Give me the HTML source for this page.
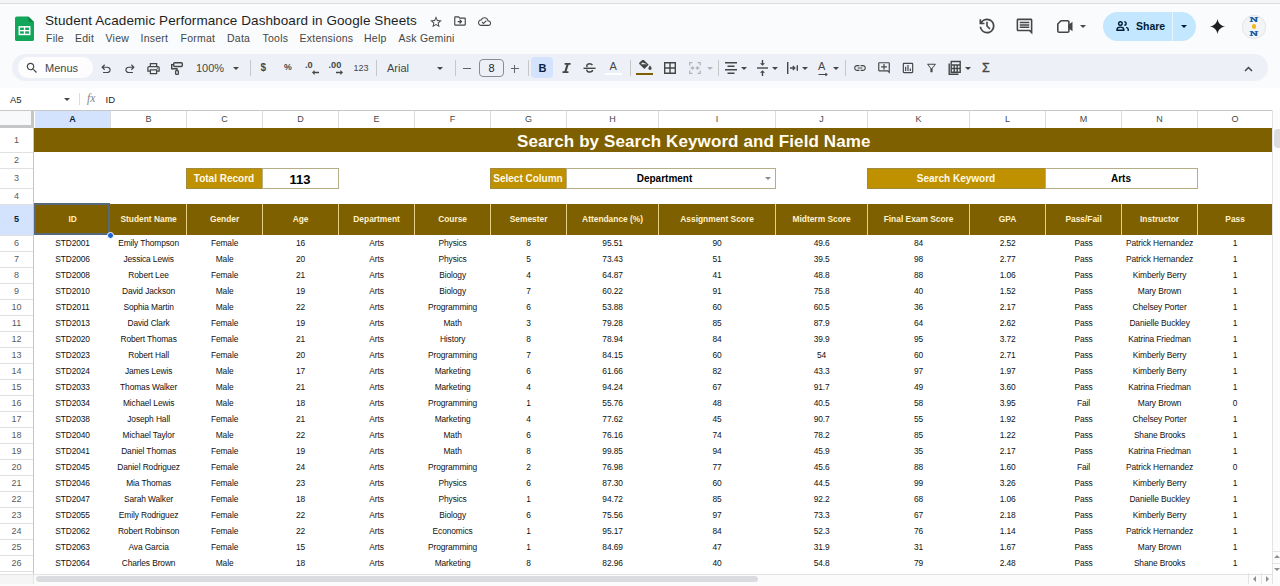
<!DOCTYPE html>
<html><head><meta charset="utf-8"><title>Student Academic Performance Dashboard</title>
<style>
*{margin:0;padding:0;box-sizing:border-box}
html,body{width:1280px;height:586px;overflow:hidden;background:#f9fbfd;font-family:"Liberation Sans",sans-serif;color:#1f1f1f;position:relative}
.a{position:absolute;white-space:nowrap}
.ic{position:absolute}
.c{position:absolute;text-align:center;white-space:nowrap;overflow:hidden}
.menu{position:absolute;top:31.5px;font-size:10.5px;letter-spacing:0.25px;color:#444746;white-space:nowrap}
.dd{position:absolute;width:0;height:0;border-left:3.5px solid transparent;border-right:3.5px solid transparent;border-top:3.5px solid #444746}
.dv{position:absolute;width:1px;height:16px;top:60px;background:#c7c7c7}
</style></head><body>

<div class="a" style="left:0;top:0;width:1280px;height:3px;background:#f4f5f7"></div>
<div class="a" style="left:0;top:3px;width:1280px;height:1px;background:#dadce0"></div>
<svg class="ic" style="left:15.3px;top:16px" width="19" height="25.5" viewBox="0 0 20 26">
<path d="M2 0h12l6 6v18a2 2 0 0 1-2 2H2a2 2 0 0 1-2-2V2a2 2 0 0 1 2-2z" fill="#11a65a"/>
<path d="M14 0l6 6h-4a2 2 0 0 1-2-2z" fill="#0b8a45"/>
<rect x="4.5" y="11" width="11" height="8" fill="none" stroke="#fff" stroke-width="1.6"/>
<line x1="4.5" y1="15" x2="15.5" y2="15" stroke="#fff" stroke-width="1.4"/>
<line x1="10" y1="11" x2="10" y2="19" stroke="#fff" stroke-width="1.4"/>
</svg>
<div class="a" style="left:45px;top:13px;font-size:13.5px;letter-spacing:0.09px;color:#1f1f1f">Student Academic Performance Dashboard in Google Sheets</div>
<div class="menu" style="left:46px">File</div>
<div class="menu" style="left:75px">Edit</div>
<div class="menu" style="left:105.5px">View</div>
<div class="menu" style="left:140.5px">Insert</div>
<div class="menu" style="left:180.5px">Format</div>
<div class="menu" style="left:227px">Data</div>
<div class="menu" style="left:262.5px">Tools</div>
<div class="menu" style="left:299.5px">Extensions</div>
<div class="menu" style="left:364px">Help</div>
<div class="menu" style="left:398.5px">Ask Gemini</div>
<svg class="ic" style="left:429px;top:15px" width="14" height="14" viewBox="0 0 24 24"><path fill="#444746" d="M22 9.24l-7.19-.62L12 2 9.19 8.63 2 9.24l5.46 4.73L5.82 21 12 17.27 18.18 21l-1.63-7.03L22 9.24zM12 15.4l-3.76 2.27 1-4.28-3.32-2.88 4.38-.38L12 6.1l1.71 4.04 4.38.38-3.32 2.88 1 4.28L12 15.4z"/></svg>
<svg class="ic" style="left:453.1px;top:14.4px" width="14" height="14" viewBox="0 0 24 24"><path fill="#444746" d="M20 6h-8l-2-2H4c-1.1 0-1.99.9-1.99 2L2 18c0 1.1.9 2 2 2h16c1.1 0 2-.9 2-2V8c0-1.1-.9-2-2-2zm0 12H4V6h5.17l2 2H20v10zm-7.84-6H8v2h4.16l-1.59 1.59L11.99 17 16 13.01 11.99 9l-1.41 1.41L12.16 12z"/></svg>
<svg class="ic" style="left:477.8px;top:14.8px" width="13.1" height="13.1" viewBox="0 0 24 24"><path fill="#444746" d="M19.35 10.04C18.67 6.59 15.64 4 12 4 9.11 4 6.6 5.64 5.35 8.04 2.34 8.36 0 10.91 0 14c0 3.31 2.69 6 6 6h13c2.76 0 5-2.24 5-5 0-2.64-2.05-4.78-4.65-4.96zM19 18H6c-2.21 0-4-1.790-4-4 0-2.05 1.53-3.76 3.560-3.97l1.07-.11.5-.95C8.08 7.14 9.94 6 12 6c2.62 0 4.88 1.86 5.39 4.43l.3 1.5 1.53.11c1.56.1 2.78 1.41 2.78 2.96 0 1.65-1.35 3-3 3zm-9-3.82l-2.09-2.09L6.5 13.5 10 17l6.01-6.01-1.41-1.41z"/></svg>
<svg class="ic" style="left:976.8px;top:16.3px" width="20" height="20" viewBox="0 -960 960 960"><path fill="#444746" d="M480-120q-138 0-240.5-91.5T122-440h82q14 104 92.5 172T480-200q117 0 198.5-81.5T760-480q0-117-81.5-198.5T480-760q-69 0-129 32t-101 88h110v80H120v-240h80v94q51-64 124.5-99T480-840q75 0 140.5 28.5t114 77q48.5 48.5 77 114T840-480q0 75-28.5 140.5t-77 114q-48.5 48.5-114 77T480-120Zm112-192L440-464v-216h80v184l128 128-56 56Z"/></svg>
<svg class="ic" style="left:1014.7px;top:17px" width="19" height="19" viewBox="0 0 24 24"><path fill="#444746" d="M21.99 4c0-1.1-.89-2-1.99-2H4c-1.1 0-2 .9-2 2v12c0 1.1.9 2 2 2h14l4 4-.01-18zM20 4v13.17L18.83 16H4V4h16zM6 12h12v2H6zm0-3h12v2H6zm0-3h12v2H6z"/></svg>
<svg class="ic" style="left:1056.5px;top:20px" width="16" height="13" viewBox="0 0 16 13"><path fill="none" stroke="#444746" stroke-width="1.6" stroke-linejoin="round" d="M4 0.8H10.6a1.3 1.3 0 0 1 1.3 1.3V10.9a1.3 1.3 0 0 1-1.3 1.3H2.1A1.3 1.3 0 0 1 0.8 10.9V4z"/><path fill="#444746" d="M11.5 4.8L15.5 1.8V11.2L11.5 8.2z"/></svg>
<div class="dd" style="left:1079.5px;top:25px"></div>
<div class="a" style="left:1103px;top:11.5px;width:93px;height:29px;border-radius:14.5px;background:#c2e7ff"></div>
<div class="a" style="left:1172px;top:11px;width:1px;height:30px;background:#f9fbfd;opacity:.7"></div>
<svg class="ic" style="left:1116px;top:21px" width="13" height="10" viewBox="0 0 13 10"><g fill="none" stroke="#001d35" stroke-width="1.4"><circle cx="4.4" cy="2.5" r="1.8"/><path d="M1 9.2V8.4c0-1.3 1.5-2.3 3.4-2.3s3.4 1 3.4 2.3v.8z"/><path d="M8.3 0.7a1.8 1.8 0 0 1 0 3.6"/><path d="M10.2 6.3c1.2.4 2 1.1 2 2V9.9"/></g></svg>
<div class="a" style="left:1136px;top:19.8px;font-size:10.5px;font-weight:bold;color:#001d35">Share</div>
<div class="dd" style="left:1181px;top:25px;border-top-color:#001d35"></div>
<svg class="ic" style="left:1209px;top:18px" width="17" height="17" viewBox="0 0 24 24"><path fill="#1f1f1f" d="M12 1C12.6 7 17 11.4 23 12 17 12.6 12.6 17 12 23 11.4 17 7 12.6 1 12 7 11.4 11.4 7 12 1z"/></svg>
<div class="a" style="left:1242px;top:15px;width:24px;height:23.5px;border-radius:50%;background:#f3f4f6;border:1px solid #e4e6ea"></div>
<svg class="ic" style="left:1249px;top:16.8px" width="10" height="5.2" viewBox="0 0 10 6"><path fill="#1b5ea6" d="M0 0h3.4l3.4 3.2V1H5.8V0H10v1H8.8v5H6.9L2.9 2.1V5H4v1H0V5h1.2V1H0z"/></svg>
<div class="a" style="left:1251.8px;top:24.2px;width:4.4px;height:4.4px;border-radius:50%;background:#f4b41a"></div>
<svg class="ic" style="left:1249px;top:30.8px" width="10" height="5.2" viewBox="0 0 10 6"><path fill="#1b5ea6" d="M0 0h3.4l3.4 3.2V1H5.8V0H10v1H8.8v5H6.9L2.9 2.1V5H4v1H0V5h1.2V1H0z"/></svg>
<div class="a" style="left:12px;top:54px;width:1256px;height:27px;border-radius:13.5px;background:#edf1f7"></div>
<div class="a" style="left:17.5px;top:57px;width:75.5px;height:21px;border-radius:10.5px;background:#fdfdfe"></div>
<svg class="ic" style="left:25px;top:61px" width="14" height="14" viewBox="0 0 24 24"><path fill="#444746" d="M15.5 14h-.79l-.28-.27C15.41 12.59 16 11.11 16 9.5 16 5.910 13.09 3 9.5 3S3 5.91 3 9.5 5.91 16 9.5 16c1.61 0 3.09-.59 4.23-1.57l.27.28v.79l5 4.99L20.49 19l-4.99-5zm-6 0C7.01 14 5 11.99 5 9.5S7.01 5 9.5 5 14 7.01 14 9.5 11.99 14 9.5 14z"/></svg>
<div class="a" style="left:45px;top:62px;font-size:11px;color:#444746">Menus</div>
<svg class="ic" style="left:99px;top:62px" width="14" height="14" viewBox="0 -960 960 960"><path fill="#444746" d="M280-200v-80h284q63 0 109.5-40T720-420q0-60-46.5-100T564-560H312l104 104-56 56-200-200 200-200 56 56-104 104h252q97 0 166.5 63T800-420q0 94-69.5 157T564-200H280Z"/></svg>
<svg class="ic" style="left:123px;top:62px" width="14" height="14" viewBox="0 -960 960 960"><path fill="#444746" d="M396-200q-97 0-166.5-63T160-420q0-94 69.5-157T396-640h252L544-744l56-56 200 200-200 200-56-56 104-104H396q-63 0-109.5 40T240-420q0 60 46.5 100T396-280h284v80H396Z"/></svg>
<svg class="ic" style="left:146px;top:61px" width="15" height="15" viewBox="0 -960 960 960"><path fill="#444746" d="M640-640v-120H320v120h-80v-200h480v200h-80Zm-480 80h640-640Zm560 100q17 0 28.5-11.5T760-500q0-17-11.5-28.5T720-540q-17 0-28.5 11.5T680-500q0 17 11.5 28.5T720-460Zm-80 260v-160H320v160h320Zm80 80H240v-160H80v-240q0-51 35-85.5t85-34.5h560q51 0 85.5 34.5T880-520v240H720v160Zm80-240v-160q0-17-11.5-28.5T760-560H200q-17 0-28.5 11.5T160-520v160h80v-80h480v80h80Z"/></svg>
<svg class="ic" style="left:170.5px;top:62px" width="12" height="13" viewBox="0 0 12 13"><rect x="2.7" y="0.7" width="8.6" height="3.8" rx="0.9" fill="none" stroke="#444746" stroke-width="1.4"/><path fill="none" stroke="#444746" stroke-width="1.4" d="M2.7 2.6H0.7v4.2H6v2"/><rect x="4.6" y="8.6" width="2.8" height="3.8" rx="0.8" fill="none" stroke="#444746" stroke-width="1.3"/></svg>
<div class="a" style="left:196px;top:62px;font-size:11px;color:#444746">100%</div>
<div class="dd" style="left:233px;top:67px"></div>
<div class="dv" style="left:250px"></div>
<div class="a" style="left:260.5px;top:62px;font-size:10px;font-weight:bold;color:#444746">$</div>
<div class="a" style="left:283.5px;top:60.5px;font-size:9.5px;font-weight:bold;color:#444746;transform:scaleX(0.92);transform-origin:left">%</div>
<div class="a" style="left:305px;top:59.5px;font-size:9.2px;font-weight:bold;color:#444746">.0</div>
<svg class="ic" style="left:311.5px;top:69.5px" width="7" height="5" viewBox="0 0 7 5"><path fill="#444746" d="M0 2.5L2.6 0v1.8H7v1.4H2.6V5z"/></svg>
<div class="a" style="left:328.5px;top:59.5px;font-size:9.2px;font-weight:bold;color:#444746">.00</div>
<svg class="ic" style="left:335.5px;top:69.5px" width="7" height="5" viewBox="0 0 7 5"><path fill="#444746" d="M7 2.5L4.4 0v1.8H0v1.4h4.4V5z"/></svg>
<div class="a" style="left:353.5px;top:63px;font-size:9px;color:#444746">123</div>
<div class="dv" style="left:375.5px"></div>
<div class="a" style="left:387px;top:62px;font-size:11px;color:#444746">Arial</div>
<div class="dd" style="left:436.5px;top:67px"></div>
<div class="dv" style="left:454.5px"></div>
<div class="a" style="left:462.5px;top:68px;width:8px;height:1.3px;background:#5f6368"></div>
<div class="a" style="left:479px;top:59px;width:25px;height:18px;border:1px solid #8a8d8f;border-radius:4px"></div>
<div class="a" style="left:479px;top:62px;width:25px;text-align:center;font-size:11px;color:#1f1f1f">8</div>
<div class="a" style="left:510.5px;top:68px;width:8.5px;height:1.3px;background:#5f6368"></div>
<div class="a" style="left:514.1px;top:64.5px;width:1.3px;height:8.5px;background:#5f6368"></div>
<div class="dv" style="left:527.5px"></div>
<div class="a" style="left:531px;top:57px;width:22px;height:21px;border-radius:4px;background:#d3e3fd"></div>
<div class="a" style="left:538.5px;top:62px;font-size:11px;font-weight:bold;color:#0b1f3f">B</div>
<svg class="ic" style="left:562px;top:63px" width="9" height="10" viewBox="0 0 11 12"><path fill="#444746" d="M3.2 0h7.3v1.9H8.1L5.6 10.1h2.3V12H0.6v-1.9h2.3L5.4 1.9H3.2z"/></svg>
<svg class="ic" style="left:583px;top:63px" width="13" height="10" viewBox="0 0 13 10"><path fill="none" stroke="#444746" stroke-width="1.5" d="M9.4 2.2C8.9 1.2 7.9 0.8 6.6 0.8 5 0.8 3.8 1.6 3.8 2.7 3.8 3.2 4 3.6 4.4 3.9M3.6 6.6c.3 1.5 1.5 2.5 3 2.5 1.7 0 2.9-.8 2.9-2"/><rect x="0.5" y="4.6" width="12" height="1.4" fill="#444746"/></svg>
<div class="a" style="left:609.5px;top:60px;font-size:11px;color:#444746">A</div>
<div class="a" style="left:605px;top:72.5px;width:17px;height:2px;background:#ffffff"></div>
<div class="dv" style="left:629.5px"></div>
<svg class="ic" style="left:638.5px;top:59.5px" width="13" height="11" viewBox="0 0 13 11"><path fill="#444746" d="M3 0.2l1.1-1 5.6 5.6-4.3 4.3L0.5 4.3c-.5-.5-.5-1.2 0-1.7L3 .2z M3.5 2.5L1.8 4.2h6.3z"/><path fill="#444746" d="M11 5.5c0 0-1.6 1.8-1.6 2.8 0 .9.7 1.6 1.6 1.6s1.6-.7 1.6-1.6c0-1-1.6-2.8-1.6-2.8z"/></svg>
<div class="a" style="left:636px;top:72.5px;width:17px;height:2.5px;background:#7f6000"></div>
<svg class="ic" style="left:664px;top:62px" width="12" height="12" viewBox="0 0 12 12"><path fill="none" stroke="#444746" stroke-width="1.4" d="M.7 .7h10.6v10.6H.7z M6 .7v10.6 M.7 6h10.6"/></svg>
<svg class="ic" style="left:689px;top:62px" width="12" height="12" viewBox="0 0 12 12"><path fill="none" stroke="#b4b7ba" stroke-width="1.3" d="M.7 3.5V.7h2.8 M8.5 .7h2.8v2.8 M11.3 8.5v2.8H8.5 M3.5 11.3H.7V8.5 M1.5 6h3 M3.2 4.5L4.6 6 3.2 7.5 M10.5 6h-3 M8.8 4.5L7.4 6l1.4 1.5"/></svg>
<div class="dd" style="left:707px;top:67px;border-top-color:#b4b7ba"></div>
<div class="dv" style="left:718px"></div>
<svg class="ic" style="left:725px;top:62px" width="12" height="12" viewBox="0 0 12 12"><path fill="#444746" d="M0 0h12v1.4H0zM2.5 3.5h7v1.4h-7zM0 7h12v1.4H0zM2.5 10.5h7v1.4h-7z"/></svg>
<div class="dd" style="left:741px;top:67px"></div>
<svg class="ic" style="left:756.5px;top:60px" width="11" height="16" viewBox="0 0 11 16"><path fill="#444746" d="M0 7.3h11v1.4H0z"/><path fill="#444746" d="M5.5 5.8L3 3.3h1.8V0h1.4v3.3H8z M5.5 10.2L3 12.7h1.8V16h1.4v-3.3H8z"/></svg>
<div class="dd" style="left:771.5px;top:67px"></div>
<svg class="ic" style="left:787px;top:62px" width="11" height="12" viewBox="0 0 11 12"><path fill="#444746" d="M0 0h1.4v12H0z M9.6 3.2H11v5.6H9.6z"/><path fill="none" stroke="#444746" stroke-width="1.3" d="M3 6h4.8 M5.8 4l2 2-2 2"/></svg>
<div class="dd" style="left:802px;top:67px"></div>
<div class="a" style="left:818px;top:60px;font-size:11px;color:#444746">A</div>
<svg class="ic" style="left:818px;top:72px" width="11" height="5" viewBox="0 0 11 5"><path fill="none" stroke="#444746" stroke-width="1.1" d="M0.5 2.5h8.5 M7.5 1.2l1.5 1.3-1.5 1.3"/></svg>
<div class="dd" style="left:833px;top:67px"></div>
<div class="dv" style="left:845px"></div>
<svg class="ic" style="left:853px;top:61px" width="14" height="14" viewBox="0 0 24 24"><path fill="#444746" d="M3.9 12c0-1.71 1.39-3.1 3.1-3.1h4V7H7c-2.76 0-5 2.24-5 5s2.24 5 5 5h4v-1.9H7c-1.71 0-3.1-1.39-3.1-3.1zM8 13h8v-2H8v2zm9-6h-4v1.9h4c1.71 0 3.1 1.39 3.1 3.1s-1.39 3.1-3.1 3.1h-4V17h4c2.76 0 5-2.24 5-5s-2.24-5-5-5z"/></svg>
<svg class="ic" style="left:877px;top:61px" width="14" height="14" viewBox="0 0 24 24"><path fill="#444746" d="M22 4c0-1.1-.9-2-2-2H4c-1.1 0-2 .9-2 2v12c0 1.1.9 2 2 2h14l4 4V4zm-2 13.17L18.83 16H4V4h16v13.17zM13 5h-2v4H7v2h4v4h2v-4h4V9h-4z"/></svg>
<svg class="ic" style="left:901px;top:61px" width="14" height="14" viewBox="0 0 24 24"><path fill="#444746" d="M19 3H5c-1.1 0-2 .9-2 2v14c0 1.1.9 2 2 2h14c1.1 0 2-.9 2-2V5c0-1.1-.9-2-2-2zm0 16H5V5h14v14zM7 10h2v7H7zm4-3h2v10h-2zm4 6h2v4h-2z"/></svg>
<svg class="ic" style="left:925px;top:61px" width="13" height="14" viewBox="0 0 24 24"><path fill="#444746" d="M4.25 5.61C6.27 8.2 10 13 10 13v6c0 .55.45 1 1 1h2c.55 0 1-.45 1-1v-6s3.72-4.8 5.74-7.39A.998.998 0 0 0 18.95 4H5.04c-.83 0-1.3.95-.79 1.61zM6.34 6h11.32L12 12.97 6.34 6z" transform="translate(0,0)"/></svg>
<svg class="ic" style="left:947px;top:60px" width="15" height="16" viewBox="0 0 15 16"><path fill="none" stroke="#444746" stroke-width="1.4" d="M2.2 3.5v10.8h9.3 M4.2 1.5h9v10.8h-9z M4.2 5h9 M4.2 8.5h9 M7.2 5v7.3 M10.2 5v7.3"/></svg>
<div class="dd" style="left:964.5px;top:67px"></div>
<div class="a" style="left:982px;top:61px;font-size:12.5px;color:#444746;-webkit-text-stroke:0.4px #444746">&#931;</div>
<svg class="ic" style="left:1243.5px;top:65.5px" width="9" height="6" viewBox="0 0 9 6"><path fill="none" stroke="#444746" stroke-width="1.5" d="M1 5L4.5 1.5 8 5"/></svg>
<div class="a" style="left:0;top:88px;width:1280px;height:22px;background:#ffffff"></div>
<div class="a" style="left:10px;top:93.5px;font-size:9.5px;color:#1f1f1f">A5</div>
<div class="dd" style="left:63.5px;top:97.5px"></div>
<div class="a" style="left:79px;top:93px;width:1px;height:12px;background:#dadce0"></div>
<div class="a" style="left:87px;top:92px;font-size:11.5px;font-style:italic;color:#80868b;font-family:'Liberation Serif',serif">fx</div>
<div class="a" style="left:105.5px;top:93.5px;font-size:9.5px;color:#1f1f1f">ID</div>
<div class="a" style="left:0;top:110px;width:1272px;height:464px;background:#ffffff"></div>
<div class="a" style="left:0;top:110px;width:1280px;height:1px;background:#c7c7c7"></div>
<div class="c" style="left:34.6px;top:111px;width:76px;height:17px;line-height:17px;font-size:9px;background:#d3e3fd;color:#0b1f3f;font-weight:bold">A</div>
<div class="a" style="left:110px;top:111px;width:1px;height:17px;background:#dcdcdc"></div>
<div class="c" style="left:110.6px;top:111px;width:76px;height:17px;line-height:17px;font-size:9px;color:#444746">B</div>
<div class="a" style="left:186px;top:111px;width:1px;height:17px;background:#dcdcdc"></div>
<div class="c" style="left:186.6px;top:111px;width:76px;height:17px;line-height:17px;font-size:9px;color:#444746">C</div>
<div class="a" style="left:262px;top:111px;width:1px;height:17px;background:#dcdcdc"></div>
<div class="c" style="left:262.6px;top:111px;width:76px;height:17px;line-height:17px;font-size:9px;color:#444746">D</div>
<div class="a" style="left:338px;top:111px;width:1px;height:17px;background:#dcdcdc"></div>
<div class="c" style="left:338.6px;top:111px;width:76px;height:17px;line-height:17px;font-size:9px;color:#444746">E</div>
<div class="a" style="left:414px;top:111px;width:1px;height:17px;background:#dcdcdc"></div>
<div class="c" style="left:414.6px;top:111px;width:76px;height:17px;line-height:17px;font-size:9px;color:#444746">F</div>
<div class="a" style="left:490px;top:111px;width:1px;height:17px;background:#dcdcdc"></div>
<div class="c" style="left:490.6px;top:111px;width:76px;height:17px;line-height:17px;font-size:9px;color:#444746">G</div>
<div class="a" style="left:566px;top:111px;width:1px;height:17px;background:#dcdcdc"></div>
<div class="c" style="left:566.6px;top:111px;width:92px;height:17px;line-height:17px;font-size:9px;color:#444746">H</div>
<div class="a" style="left:658px;top:111px;width:1px;height:17px;background:#dcdcdc"></div>
<div class="c" style="left:658.6px;top:111px;width:117px;height:17px;line-height:17px;font-size:9px;color:#444746">I</div>
<div class="a" style="left:775px;top:111px;width:1px;height:17px;background:#dcdcdc"></div>
<div class="c" style="left:775.6px;top:111px;width:92px;height:17px;line-height:17px;font-size:9px;color:#444746">J</div>
<div class="a" style="left:867px;top:111px;width:1px;height:17px;background:#dcdcdc"></div>
<div class="c" style="left:867.6px;top:111px;width:102px;height:17px;line-height:17px;font-size:9px;color:#444746">K</div>
<div class="a" style="left:969px;top:111px;width:1px;height:17px;background:#dcdcdc"></div>
<div class="c" style="left:969.6px;top:111px;width:76px;height:17px;line-height:17px;font-size:9px;color:#444746">L</div>
<div class="a" style="left:1045px;top:111px;width:1px;height:17px;background:#dcdcdc"></div>
<div class="c" style="left:1045.6px;top:111px;width:76px;height:17px;line-height:17px;font-size:9px;color:#444746">M</div>
<div class="a" style="left:1121px;top:111px;width:1px;height:17px;background:#dcdcdc"></div>
<div class="c" style="left:1121.6px;top:111px;width:76px;height:17px;line-height:17px;font-size:9px;color:#444746">N</div>
<div class="a" style="left:1197px;top:111px;width:1px;height:17px;background:#dcdcdc"></div>
<div class="c" style="left:1197.6px;top:111px;width:75px;height:17px;line-height:17px;font-size:9px;color:#444746">O</div>
<div class="a" style="left:1272px;top:111px;width:1px;height:17px;background:#dcdcdc"></div>
<div class="a" style="left:0;top:111px;width:31px;height:14px;background:#f8f9fa"></div>
<div class="a" style="left:31px;top:111px;width:3px;height:17px;background:#c4c7c5"></div>
<div class="a" style="left:0;top:125px;width:34px;height:3px;background:#c4c7c5"></div>
<div class="a" style="left:0;top:204px;width:33px;height:31px;background:#d3e3fd"></div>
<div class="c" style="left:0;top:127.5px;width:33px;height:24px;line-height:24px;font-size:9px;color:#575a5e">1</div>
<div class="a" style="left:0;top:152px;width:33px;height:1px;background:#e1e1e1"></div>
<div class="c" style="left:0;top:151.5px;width:33px;height:16px;line-height:16px;font-size:9px;color:#575a5e">2</div>
<div class="a" style="left:0;top:168px;width:33px;height:1px;background:#e1e1e1"></div>
<div class="c" style="left:0;top:167.5px;width:33px;height:20px;line-height:20px;font-size:9px;color:#575a5e">3</div>
<div class="a" style="left:0;top:188px;width:33px;height:1px;background:#e1e1e1"></div>
<div class="c" style="left:0;top:187.5px;width:33px;height:16px;line-height:16px;font-size:9px;color:#575a5e">4</div>
<div class="a" style="left:0;top:204px;width:33px;height:1px;background:#e1e1e1"></div>
<div class="c" style="left:0;top:203.5px;width:33px;height:31px;line-height:31px;font-size:9px;color:#0b1f3f;font-weight:bold">5</div>
<div class="a" style="left:0;top:235px;width:33px;height:1px;background:#e1e1e1"></div>
<div class="c" style="left:0;top:234.5px;width:33px;height:16px;line-height:16px;font-size:9px;color:#575a5e">6</div>
<div class="a" style="left:0;top:251px;width:33px;height:1px;background:#e1e1e1"></div>
<div class="c" style="left:0;top:250.5px;width:33px;height:16px;line-height:16px;font-size:9px;color:#575a5e">7</div>
<div class="a" style="left:0;top:267px;width:33px;height:1px;background:#e1e1e1"></div>
<div class="c" style="left:0;top:266.5px;width:33px;height:16px;line-height:16px;font-size:9px;color:#575a5e">8</div>
<div class="a" style="left:0;top:283px;width:33px;height:1px;background:#e1e1e1"></div>
<div class="c" style="left:0;top:282.5px;width:33px;height:16px;line-height:16px;font-size:9px;color:#575a5e">9</div>
<div class="a" style="left:0;top:299px;width:33px;height:1px;background:#e1e1e1"></div>
<div class="c" style="left:0;top:298.5px;width:33px;height:16px;line-height:16px;font-size:9px;color:#575a5e">10</div>
<div class="a" style="left:0;top:315px;width:33px;height:1px;background:#e1e1e1"></div>
<div class="c" style="left:0;top:314.5px;width:33px;height:16px;line-height:16px;font-size:9px;color:#575a5e">11</div>
<div class="a" style="left:0;top:331px;width:33px;height:1px;background:#e1e1e1"></div>
<div class="c" style="left:0;top:330.5px;width:33px;height:16px;line-height:16px;font-size:9px;color:#575a5e">12</div>
<div class="a" style="left:0;top:347px;width:33px;height:1px;background:#e1e1e1"></div>
<div class="c" style="left:0;top:346.5px;width:33px;height:16px;line-height:16px;font-size:9px;color:#575a5e">13</div>
<div class="a" style="left:0;top:363px;width:33px;height:1px;background:#e1e1e1"></div>
<div class="c" style="left:0;top:362.5px;width:33px;height:16px;line-height:16px;font-size:9px;color:#575a5e">14</div>
<div class="a" style="left:0;top:379px;width:33px;height:1px;background:#e1e1e1"></div>
<div class="c" style="left:0;top:378.5px;width:33px;height:16px;line-height:16px;font-size:9px;color:#575a5e">15</div>
<div class="a" style="left:0;top:395px;width:33px;height:1px;background:#e1e1e1"></div>
<div class="c" style="left:0;top:394.5px;width:33px;height:16px;line-height:16px;font-size:9px;color:#575a5e">16</div>
<div class="a" style="left:0;top:411px;width:33px;height:1px;background:#e1e1e1"></div>
<div class="c" style="left:0;top:410.5px;width:33px;height:16px;line-height:16px;font-size:9px;color:#575a5e">17</div>
<div class="a" style="left:0;top:427px;width:33px;height:1px;background:#e1e1e1"></div>
<div class="c" style="left:0;top:426.5px;width:33px;height:16px;line-height:16px;font-size:9px;color:#575a5e">18</div>
<div class="a" style="left:0;top:443px;width:33px;height:1px;background:#e1e1e1"></div>
<div class="c" style="left:0;top:442.5px;width:33px;height:16px;line-height:16px;font-size:9px;color:#575a5e">19</div>
<div class="a" style="left:0;top:459px;width:33px;height:1px;background:#e1e1e1"></div>
<div class="c" style="left:0;top:458.5px;width:33px;height:16px;line-height:16px;font-size:9px;color:#575a5e">20</div>
<div class="a" style="left:0;top:475px;width:33px;height:1px;background:#e1e1e1"></div>
<div class="c" style="left:0;top:474.5px;width:33px;height:16px;line-height:16px;font-size:9px;color:#575a5e">21</div>
<div class="a" style="left:0;top:491px;width:33px;height:1px;background:#e1e1e1"></div>
<div class="c" style="left:0;top:490.5px;width:33px;height:16px;line-height:16px;font-size:9px;color:#575a5e">22</div>
<div class="a" style="left:0;top:507px;width:33px;height:1px;background:#e1e1e1"></div>
<div class="c" style="left:0;top:506.5px;width:33px;height:16px;line-height:16px;font-size:9px;color:#575a5e">23</div>
<div class="a" style="left:0;top:523px;width:33px;height:1px;background:#e1e1e1"></div>
<div class="c" style="left:0;top:522.5px;width:33px;height:16px;line-height:16px;font-size:9px;color:#575a5e">24</div>
<div class="a" style="left:0;top:539px;width:33px;height:1px;background:#e1e1e1"></div>
<div class="c" style="left:0;top:538.5px;width:33px;height:16px;line-height:16px;font-size:9px;color:#575a5e">25</div>
<div class="a" style="left:0;top:555px;width:33px;height:1px;background:#e1e1e1"></div>
<div class="c" style="left:0;top:554.5px;width:33px;height:16px;line-height:16px;font-size:9px;color:#575a5e">26</div>
<div class="a" style="left:0;top:571px;width:33px;height:1px;background:#e1e1e1"></div>
<div class="a" style="left:33px;top:128px;width:1px;height:446px;background:#c7c7c7"></div>
<div class="a" style="left:34px;top:128px;width:1238px;height:24px;background:#7f6000"></div>
<div class="a" style="left:517px;top:131.6px;font-size:17px;letter-spacing:0.1px;font-weight:bold;color:#fffdf3">Search by Search Keyword and Field Name</div>
<div class="a" style="left:186px;top:168px;width:77px;height:21px;background:#bf9000;border:1px solid #a08a3c;"></div>
<div class="a" style="left:262px;top:168px;width:77px;height:21px;background:#ffffff;border:1px solid #b5ad86;"></div>
<div class="c" style="left:186px;top:169px;width:76px;height:20px;line-height:20px;font-size:10px;font-weight:bold;color:#fffbea">Total Record</div>
<div class="c" style="left:262px;top:169.5px;width:76px;height:20px;line-height:20px;font-size:13px;font-weight:bold;color:#000">113</div>
<div class="a" style="left:490px;top:168px;width:77px;height:21px;background:#bf9000;border:1px solid #a08a3c;"></div>
<div class="a" style="left:566px;top:168px;width:210px;height:21px;background:#ffffff;border:1px solid #b5ad86;"></div>
<div class="c" style="left:490px;top:169px;width:76px;height:20px;line-height:20px;font-size:10px;font-weight:bold;color:#fffbea">Select Column</div>
<div class="c" style="left:566px;top:169px;width:197px;height:20px;line-height:20px;font-size:10px;font-weight:bold;color:#000">Department</div>
<div class="dd" style="left:764.5px;top:176.5px;border-top-color:#8a8a8a;border-left-width:3px;border-right-width:3px;border-top-width:3px"></div>
<div class="a" style="left:867px;top:168px;width:179px;height:21px;background:#bf9000;border:1px solid #a08a3c;"></div>
<div class="a" style="left:1045px;top:168px;width:153px;height:21px;background:#ffffff;border:1px solid #b5ad86;"></div>
<div class="c" style="left:867px;top:169px;width:178px;height:20px;line-height:20px;font-size:10px;font-weight:bold;color:#fffbea">Search Keyword</div>
<div class="c" style="left:1045px;top:169px;width:152px;height:20px;line-height:20px;font-size:10px;font-weight:bold;color:#000">Arts</div>
<div class="a" style="left:34px;top:204px;width:1238px;height:31px;background:#7f6000"></div>
<div class="c" style="left:34.6px;top:204px;width:76px;height:31px;line-height:31px;font-size:8.4px;font-weight:bold;color:#fff2cc">ID</div>
<div class="c" style="left:110.6px;top:204px;width:76px;height:31px;line-height:31px;font-size:8.4px;font-weight:bold;color:#fff2cc">Student Name</div>
<div class="a" style="left:186px;top:204px;width:1px;height:31px;background:#e6cf86"></div>
<div class="c" style="left:186.6px;top:204px;width:76px;height:31px;line-height:31px;font-size:8.4px;font-weight:bold;color:#fff2cc">Gender</div>
<div class="a" style="left:262px;top:204px;width:1px;height:31px;background:#e6cf86"></div>
<div class="c" style="left:262.6px;top:204px;width:76px;height:31px;line-height:31px;font-size:8.4px;font-weight:bold;color:#fff2cc">Age</div>
<div class="a" style="left:338px;top:204px;width:1px;height:31px;background:#e6cf86"></div>
<div class="c" style="left:338.6px;top:204px;width:76px;height:31px;line-height:31px;font-size:8.4px;font-weight:bold;color:#fff2cc">Department</div>
<div class="a" style="left:414px;top:204px;width:1px;height:31px;background:#e6cf86"></div>
<div class="c" style="left:414.6px;top:204px;width:76px;height:31px;line-height:31px;font-size:8.4px;font-weight:bold;color:#fff2cc">Course</div>
<div class="a" style="left:490px;top:204px;width:1px;height:31px;background:#e6cf86"></div>
<div class="c" style="left:490.6px;top:204px;width:76px;height:31px;line-height:31px;font-size:8.4px;font-weight:bold;color:#fff2cc">Semester</div>
<div class="a" style="left:566px;top:204px;width:1px;height:31px;background:#e6cf86"></div>
<div class="c" style="left:566.6px;top:204px;width:92px;height:31px;line-height:31px;font-size:8.4px;font-weight:bold;color:#fff2cc">Attendance (%)</div>
<div class="a" style="left:658px;top:204px;width:1px;height:31px;background:#e6cf86"></div>
<div class="c" style="left:658.6px;top:204px;width:117px;height:31px;line-height:31px;font-size:8.4px;font-weight:bold;color:#fff2cc">Assignment Score</div>
<div class="a" style="left:775px;top:204px;width:1px;height:31px;background:#e6cf86"></div>
<div class="c" style="left:775.6px;top:204px;width:92px;height:31px;line-height:31px;font-size:8.4px;font-weight:bold;color:#fff2cc">Midterm Score</div>
<div class="a" style="left:867px;top:204px;width:1px;height:31px;background:#e6cf86"></div>
<div class="c" style="left:867.6px;top:204px;width:102px;height:31px;line-height:31px;font-size:8.4px;font-weight:bold;color:#fff2cc">Final Exam Score</div>
<div class="a" style="left:969px;top:204px;width:1px;height:31px;background:#e6cf86"></div>
<div class="c" style="left:969.6px;top:204px;width:76px;height:31px;line-height:31px;font-size:8.4px;font-weight:bold;color:#fff2cc">GPA</div>
<div class="a" style="left:1045px;top:204px;width:1px;height:31px;background:#e6cf86"></div>
<div class="c" style="left:1045.6px;top:204px;width:76px;height:31px;line-height:31px;font-size:8.4px;font-weight:bold;color:#fff2cc">Pass/Fail</div>
<div class="a" style="left:1121px;top:204px;width:1px;height:31px;background:#e6cf86"></div>
<div class="c" style="left:1121.6px;top:204px;width:76px;height:31px;line-height:31px;font-size:8.4px;font-weight:bold;color:#fff2cc">Instructor</div>
<div class="a" style="left:1197px;top:204px;width:1px;height:31px;background:#e6cf86"></div>
<div class="c" style="left:1197.6px;top:204px;width:75px;height:31px;line-height:31px;font-size:8.4px;font-weight:bold;color:#fff2cc">Pass</div>
<div class="a" style="left:34px;top:203px;width:76px;height:32px;border:2px solid #56687c"></div>
<div class="a" style="left:106.5px;top:231.5px;width:7px;height:7px;border-radius:50%;background:#1a62d6;border:1px solid #fff"></div>
<div class="c" style="left:34.6px;top:235px;width:76px;height:16px;line-height:16px;font-size:8.4px;letter-spacing:-0.1px;color:#111111">STD2001</div>
<div class="c" style="left:110.6px;top:235px;width:76px;height:16px;line-height:16px;font-size:8.4px;letter-spacing:-0.1px;color:#111111">Emily Thompson</div>
<div class="c" style="left:186.6px;top:235px;width:76px;height:16px;line-height:16px;font-size:8.4px;letter-spacing:-0.1px;color:#111111">Female</div>
<div class="c" style="left:262.6px;top:235px;width:76px;height:16px;line-height:16px;font-size:8.4px;letter-spacing:-0.1px;color:#111111">16</div>
<div class="c" style="left:338.6px;top:235px;width:76px;height:16px;line-height:16px;font-size:8.4px;letter-spacing:-0.1px;color:#111111">Arts</div>
<div class="c" style="left:414.6px;top:235px;width:76px;height:16px;line-height:16px;font-size:8.4px;letter-spacing:-0.1px;color:#111111">Physics</div>
<div class="c" style="left:490.6px;top:235px;width:76px;height:16px;line-height:16px;font-size:8.4px;letter-spacing:-0.1px;color:#111111">8</div>
<div class="c" style="left:566.6px;top:235px;width:92px;height:16px;line-height:16px;font-size:8.4px;letter-spacing:-0.1px;color:#111111">95.51</div>
<div class="c" style="left:658.6px;top:235px;width:117px;height:16px;line-height:16px;font-size:8.4px;letter-spacing:-0.1px;color:#111111">90</div>
<div class="c" style="left:775.6px;top:235px;width:92px;height:16px;line-height:16px;font-size:8.4px;letter-spacing:-0.1px;color:#111111">49.6</div>
<div class="c" style="left:867.6px;top:235px;width:102px;height:16px;line-height:16px;font-size:8.4px;letter-spacing:-0.1px;color:#111111">84</div>
<div class="c" style="left:969.6px;top:235px;width:76px;height:16px;line-height:16px;font-size:8.4px;letter-spacing:-0.1px;color:#111111">2.52</div>
<div class="c" style="left:1045.6px;top:235px;width:76px;height:16px;line-height:16px;font-size:8.4px;letter-spacing:-0.1px;color:#111111">Pass</div>
<div class="c" style="left:1121.6px;top:235px;width:76px;height:16px;line-height:16px;font-size:8.4px;letter-spacing:-0.1px;color:#111111">Patrick Hernandez</div>
<div class="c" style="left:1197.6px;top:235px;width:75px;height:16px;line-height:16px;font-size:8.4px;letter-spacing:-0.1px;color:#111111">1</div>
<div class="c" style="left:34.6px;top:251px;width:76px;height:16px;line-height:16px;font-size:8.4px;letter-spacing:-0.1px;color:#111111">STD2006</div>
<div class="c" style="left:110.6px;top:251px;width:76px;height:16px;line-height:16px;font-size:8.4px;letter-spacing:-0.1px;color:#111111">Jessica Lewis</div>
<div class="c" style="left:186.6px;top:251px;width:76px;height:16px;line-height:16px;font-size:8.4px;letter-spacing:-0.1px;color:#111111">Male</div>
<div class="c" style="left:262.6px;top:251px;width:76px;height:16px;line-height:16px;font-size:8.4px;letter-spacing:-0.1px;color:#111111">20</div>
<div class="c" style="left:338.6px;top:251px;width:76px;height:16px;line-height:16px;font-size:8.4px;letter-spacing:-0.1px;color:#111111">Arts</div>
<div class="c" style="left:414.6px;top:251px;width:76px;height:16px;line-height:16px;font-size:8.4px;letter-spacing:-0.1px;color:#111111">Physics</div>
<div class="c" style="left:490.6px;top:251px;width:76px;height:16px;line-height:16px;font-size:8.4px;letter-spacing:-0.1px;color:#111111">5</div>
<div class="c" style="left:566.6px;top:251px;width:92px;height:16px;line-height:16px;font-size:8.4px;letter-spacing:-0.1px;color:#111111">73.43</div>
<div class="c" style="left:658.6px;top:251px;width:117px;height:16px;line-height:16px;font-size:8.4px;letter-spacing:-0.1px;color:#111111">51</div>
<div class="c" style="left:775.6px;top:251px;width:92px;height:16px;line-height:16px;font-size:8.4px;letter-spacing:-0.1px;color:#111111">39.5</div>
<div class="c" style="left:867.6px;top:251px;width:102px;height:16px;line-height:16px;font-size:8.4px;letter-spacing:-0.1px;color:#111111">98</div>
<div class="c" style="left:969.6px;top:251px;width:76px;height:16px;line-height:16px;font-size:8.4px;letter-spacing:-0.1px;color:#111111">2.77</div>
<div class="c" style="left:1045.6px;top:251px;width:76px;height:16px;line-height:16px;font-size:8.4px;letter-spacing:-0.1px;color:#111111">Pass</div>
<div class="c" style="left:1121.6px;top:251px;width:76px;height:16px;line-height:16px;font-size:8.4px;letter-spacing:-0.1px;color:#111111">Patrick Hernandez</div>
<div class="c" style="left:1197.6px;top:251px;width:75px;height:16px;line-height:16px;font-size:8.4px;letter-spacing:-0.1px;color:#111111">1</div>
<div class="c" style="left:34.6px;top:267px;width:76px;height:16px;line-height:16px;font-size:8.4px;letter-spacing:-0.1px;color:#111111">STD2008</div>
<div class="c" style="left:110.6px;top:267px;width:76px;height:16px;line-height:16px;font-size:8.4px;letter-spacing:-0.1px;color:#111111">Robert Lee</div>
<div class="c" style="left:186.6px;top:267px;width:76px;height:16px;line-height:16px;font-size:8.4px;letter-spacing:-0.1px;color:#111111">Female</div>
<div class="c" style="left:262.6px;top:267px;width:76px;height:16px;line-height:16px;font-size:8.4px;letter-spacing:-0.1px;color:#111111">21</div>
<div class="c" style="left:338.6px;top:267px;width:76px;height:16px;line-height:16px;font-size:8.4px;letter-spacing:-0.1px;color:#111111">Arts</div>
<div class="c" style="left:414.6px;top:267px;width:76px;height:16px;line-height:16px;font-size:8.4px;letter-spacing:-0.1px;color:#111111">Biology</div>
<div class="c" style="left:490.6px;top:267px;width:76px;height:16px;line-height:16px;font-size:8.4px;letter-spacing:-0.1px;color:#111111">4</div>
<div class="c" style="left:566.6px;top:267px;width:92px;height:16px;line-height:16px;font-size:8.4px;letter-spacing:-0.1px;color:#111111">64.87</div>
<div class="c" style="left:658.6px;top:267px;width:117px;height:16px;line-height:16px;font-size:8.4px;letter-spacing:-0.1px;color:#111111">41</div>
<div class="c" style="left:775.6px;top:267px;width:92px;height:16px;line-height:16px;font-size:8.4px;letter-spacing:-0.1px;color:#111111">48.8</div>
<div class="c" style="left:867.6px;top:267px;width:102px;height:16px;line-height:16px;font-size:8.4px;letter-spacing:-0.1px;color:#111111">88</div>
<div class="c" style="left:969.6px;top:267px;width:76px;height:16px;line-height:16px;font-size:8.4px;letter-spacing:-0.1px;color:#111111">1.06</div>
<div class="c" style="left:1045.6px;top:267px;width:76px;height:16px;line-height:16px;font-size:8.4px;letter-spacing:-0.1px;color:#111111">Pass</div>
<div class="c" style="left:1121.6px;top:267px;width:76px;height:16px;line-height:16px;font-size:8.4px;letter-spacing:-0.1px;color:#111111">Kimberly Berry</div>
<div class="c" style="left:1197.6px;top:267px;width:75px;height:16px;line-height:16px;font-size:8.4px;letter-spacing:-0.1px;color:#111111">1</div>
<div class="c" style="left:34.6px;top:283px;width:76px;height:16px;line-height:16px;font-size:8.4px;letter-spacing:-0.1px;color:#111111">STD2010</div>
<div class="c" style="left:110.6px;top:283px;width:76px;height:16px;line-height:16px;font-size:8.4px;letter-spacing:-0.1px;color:#111111">David Jackson</div>
<div class="c" style="left:186.6px;top:283px;width:76px;height:16px;line-height:16px;font-size:8.4px;letter-spacing:-0.1px;color:#111111">Male</div>
<div class="c" style="left:262.6px;top:283px;width:76px;height:16px;line-height:16px;font-size:8.4px;letter-spacing:-0.1px;color:#111111">19</div>
<div class="c" style="left:338.6px;top:283px;width:76px;height:16px;line-height:16px;font-size:8.4px;letter-spacing:-0.1px;color:#111111">Arts</div>
<div class="c" style="left:414.6px;top:283px;width:76px;height:16px;line-height:16px;font-size:8.4px;letter-spacing:-0.1px;color:#111111">Biology</div>
<div class="c" style="left:490.6px;top:283px;width:76px;height:16px;line-height:16px;font-size:8.4px;letter-spacing:-0.1px;color:#111111">7</div>
<div class="c" style="left:566.6px;top:283px;width:92px;height:16px;line-height:16px;font-size:8.4px;letter-spacing:-0.1px;color:#111111">60.22</div>
<div class="c" style="left:658.6px;top:283px;width:117px;height:16px;line-height:16px;font-size:8.4px;letter-spacing:-0.1px;color:#111111">91</div>
<div class="c" style="left:775.6px;top:283px;width:92px;height:16px;line-height:16px;font-size:8.4px;letter-spacing:-0.1px;color:#111111">75.8</div>
<div class="c" style="left:867.6px;top:283px;width:102px;height:16px;line-height:16px;font-size:8.4px;letter-spacing:-0.1px;color:#111111">40</div>
<div class="c" style="left:969.6px;top:283px;width:76px;height:16px;line-height:16px;font-size:8.4px;letter-spacing:-0.1px;color:#111111">1.52</div>
<div class="c" style="left:1045.6px;top:283px;width:76px;height:16px;line-height:16px;font-size:8.4px;letter-spacing:-0.1px;color:#111111">Pass</div>
<div class="c" style="left:1121.6px;top:283px;width:76px;height:16px;line-height:16px;font-size:8.4px;letter-spacing:-0.1px;color:#111111">Mary Brown</div>
<div class="c" style="left:1197.6px;top:283px;width:75px;height:16px;line-height:16px;font-size:8.4px;letter-spacing:-0.1px;color:#111111">1</div>
<div class="c" style="left:34.6px;top:299px;width:76px;height:16px;line-height:16px;font-size:8.4px;letter-spacing:-0.1px;color:#111111">STD2011</div>
<div class="c" style="left:110.6px;top:299px;width:76px;height:16px;line-height:16px;font-size:8.4px;letter-spacing:-0.1px;color:#111111">Sophia Martin</div>
<div class="c" style="left:186.6px;top:299px;width:76px;height:16px;line-height:16px;font-size:8.4px;letter-spacing:-0.1px;color:#111111">Male</div>
<div class="c" style="left:262.6px;top:299px;width:76px;height:16px;line-height:16px;font-size:8.4px;letter-spacing:-0.1px;color:#111111">22</div>
<div class="c" style="left:338.6px;top:299px;width:76px;height:16px;line-height:16px;font-size:8.4px;letter-spacing:-0.1px;color:#111111">Arts</div>
<div class="c" style="left:414.6px;top:299px;width:76px;height:16px;line-height:16px;font-size:8.4px;letter-spacing:-0.1px;color:#111111">Programming</div>
<div class="c" style="left:490.6px;top:299px;width:76px;height:16px;line-height:16px;font-size:8.4px;letter-spacing:-0.1px;color:#111111">6</div>
<div class="c" style="left:566.6px;top:299px;width:92px;height:16px;line-height:16px;font-size:8.4px;letter-spacing:-0.1px;color:#111111">53.88</div>
<div class="c" style="left:658.6px;top:299px;width:117px;height:16px;line-height:16px;font-size:8.4px;letter-spacing:-0.1px;color:#111111">60</div>
<div class="c" style="left:775.6px;top:299px;width:92px;height:16px;line-height:16px;font-size:8.4px;letter-spacing:-0.1px;color:#111111">60.5</div>
<div class="c" style="left:867.6px;top:299px;width:102px;height:16px;line-height:16px;font-size:8.4px;letter-spacing:-0.1px;color:#111111">36</div>
<div class="c" style="left:969.6px;top:299px;width:76px;height:16px;line-height:16px;font-size:8.4px;letter-spacing:-0.1px;color:#111111">2.17</div>
<div class="c" style="left:1045.6px;top:299px;width:76px;height:16px;line-height:16px;font-size:8.4px;letter-spacing:-0.1px;color:#111111">Pass</div>
<div class="c" style="left:1121.6px;top:299px;width:76px;height:16px;line-height:16px;font-size:8.4px;letter-spacing:-0.1px;color:#111111">Chelsey Porter</div>
<div class="c" style="left:1197.6px;top:299px;width:75px;height:16px;line-height:16px;font-size:8.4px;letter-spacing:-0.1px;color:#111111">1</div>
<div class="c" style="left:34.6px;top:315px;width:76px;height:16px;line-height:16px;font-size:8.4px;letter-spacing:-0.1px;color:#111111">STD2013</div>
<div class="c" style="left:110.6px;top:315px;width:76px;height:16px;line-height:16px;font-size:8.4px;letter-spacing:-0.1px;color:#111111">David Clark</div>
<div class="c" style="left:186.6px;top:315px;width:76px;height:16px;line-height:16px;font-size:8.4px;letter-spacing:-0.1px;color:#111111">Female</div>
<div class="c" style="left:262.6px;top:315px;width:76px;height:16px;line-height:16px;font-size:8.4px;letter-spacing:-0.1px;color:#111111">19</div>
<div class="c" style="left:338.6px;top:315px;width:76px;height:16px;line-height:16px;font-size:8.4px;letter-spacing:-0.1px;color:#111111">Arts</div>
<div class="c" style="left:414.6px;top:315px;width:76px;height:16px;line-height:16px;font-size:8.4px;letter-spacing:-0.1px;color:#111111">Math</div>
<div class="c" style="left:490.6px;top:315px;width:76px;height:16px;line-height:16px;font-size:8.4px;letter-spacing:-0.1px;color:#111111">3</div>
<div class="c" style="left:566.6px;top:315px;width:92px;height:16px;line-height:16px;font-size:8.4px;letter-spacing:-0.1px;color:#111111">79.28</div>
<div class="c" style="left:658.6px;top:315px;width:117px;height:16px;line-height:16px;font-size:8.4px;letter-spacing:-0.1px;color:#111111">85</div>
<div class="c" style="left:775.6px;top:315px;width:92px;height:16px;line-height:16px;font-size:8.4px;letter-spacing:-0.1px;color:#111111">87.9</div>
<div class="c" style="left:867.6px;top:315px;width:102px;height:16px;line-height:16px;font-size:8.4px;letter-spacing:-0.1px;color:#111111">64</div>
<div class="c" style="left:969.6px;top:315px;width:76px;height:16px;line-height:16px;font-size:8.4px;letter-spacing:-0.1px;color:#111111">2.62</div>
<div class="c" style="left:1045.6px;top:315px;width:76px;height:16px;line-height:16px;font-size:8.4px;letter-spacing:-0.1px;color:#111111">Pass</div>
<div class="c" style="left:1121.6px;top:315px;width:76px;height:16px;line-height:16px;font-size:8.4px;letter-spacing:-0.1px;color:#111111">Danielle Buckley</div>
<div class="c" style="left:1197.6px;top:315px;width:75px;height:16px;line-height:16px;font-size:8.4px;letter-spacing:-0.1px;color:#111111">1</div>
<div class="c" style="left:34.6px;top:331px;width:76px;height:16px;line-height:16px;font-size:8.4px;letter-spacing:-0.1px;color:#111111">STD2020</div>
<div class="c" style="left:110.6px;top:331px;width:76px;height:16px;line-height:16px;font-size:8.4px;letter-spacing:-0.1px;color:#111111">Robert Thomas</div>
<div class="c" style="left:186.6px;top:331px;width:76px;height:16px;line-height:16px;font-size:8.4px;letter-spacing:-0.1px;color:#111111">Female</div>
<div class="c" style="left:262.6px;top:331px;width:76px;height:16px;line-height:16px;font-size:8.4px;letter-spacing:-0.1px;color:#111111">21</div>
<div class="c" style="left:338.6px;top:331px;width:76px;height:16px;line-height:16px;font-size:8.4px;letter-spacing:-0.1px;color:#111111">Arts</div>
<div class="c" style="left:414.6px;top:331px;width:76px;height:16px;line-height:16px;font-size:8.4px;letter-spacing:-0.1px;color:#111111">History</div>
<div class="c" style="left:490.6px;top:331px;width:76px;height:16px;line-height:16px;font-size:8.4px;letter-spacing:-0.1px;color:#111111">8</div>
<div class="c" style="left:566.6px;top:331px;width:92px;height:16px;line-height:16px;font-size:8.4px;letter-spacing:-0.1px;color:#111111">78.94</div>
<div class="c" style="left:658.6px;top:331px;width:117px;height:16px;line-height:16px;font-size:8.4px;letter-spacing:-0.1px;color:#111111">84</div>
<div class="c" style="left:775.6px;top:331px;width:92px;height:16px;line-height:16px;font-size:8.4px;letter-spacing:-0.1px;color:#111111">39.9</div>
<div class="c" style="left:867.6px;top:331px;width:102px;height:16px;line-height:16px;font-size:8.4px;letter-spacing:-0.1px;color:#111111">95</div>
<div class="c" style="left:969.6px;top:331px;width:76px;height:16px;line-height:16px;font-size:8.4px;letter-spacing:-0.1px;color:#111111">3.72</div>
<div class="c" style="left:1045.6px;top:331px;width:76px;height:16px;line-height:16px;font-size:8.4px;letter-spacing:-0.1px;color:#111111">Pass</div>
<div class="c" style="left:1121.6px;top:331px;width:76px;height:16px;line-height:16px;font-size:8.4px;letter-spacing:-0.1px;color:#111111">Katrina Friedman</div>
<div class="c" style="left:1197.6px;top:331px;width:75px;height:16px;line-height:16px;font-size:8.4px;letter-spacing:-0.1px;color:#111111">1</div>
<div class="c" style="left:34.6px;top:347px;width:76px;height:16px;line-height:16px;font-size:8.4px;letter-spacing:-0.1px;color:#111111">STD2023</div>
<div class="c" style="left:110.6px;top:347px;width:76px;height:16px;line-height:16px;font-size:8.4px;letter-spacing:-0.1px;color:#111111">Robert Hall</div>
<div class="c" style="left:186.6px;top:347px;width:76px;height:16px;line-height:16px;font-size:8.4px;letter-spacing:-0.1px;color:#111111">Female</div>
<div class="c" style="left:262.6px;top:347px;width:76px;height:16px;line-height:16px;font-size:8.4px;letter-spacing:-0.1px;color:#111111">20</div>
<div class="c" style="left:338.6px;top:347px;width:76px;height:16px;line-height:16px;font-size:8.4px;letter-spacing:-0.1px;color:#111111">Arts</div>
<div class="c" style="left:414.6px;top:347px;width:76px;height:16px;line-height:16px;font-size:8.4px;letter-spacing:-0.1px;color:#111111">Programming</div>
<div class="c" style="left:490.6px;top:347px;width:76px;height:16px;line-height:16px;font-size:8.4px;letter-spacing:-0.1px;color:#111111">7</div>
<div class="c" style="left:566.6px;top:347px;width:92px;height:16px;line-height:16px;font-size:8.4px;letter-spacing:-0.1px;color:#111111">84.15</div>
<div class="c" style="left:658.6px;top:347px;width:117px;height:16px;line-height:16px;font-size:8.4px;letter-spacing:-0.1px;color:#111111">60</div>
<div class="c" style="left:775.6px;top:347px;width:92px;height:16px;line-height:16px;font-size:8.4px;letter-spacing:-0.1px;color:#111111">54</div>
<div class="c" style="left:867.6px;top:347px;width:102px;height:16px;line-height:16px;font-size:8.4px;letter-spacing:-0.1px;color:#111111">60</div>
<div class="c" style="left:969.6px;top:347px;width:76px;height:16px;line-height:16px;font-size:8.4px;letter-spacing:-0.1px;color:#111111">2.71</div>
<div class="c" style="left:1045.6px;top:347px;width:76px;height:16px;line-height:16px;font-size:8.4px;letter-spacing:-0.1px;color:#111111">Pass</div>
<div class="c" style="left:1121.6px;top:347px;width:76px;height:16px;line-height:16px;font-size:8.4px;letter-spacing:-0.1px;color:#111111">Kimberly Berry</div>
<div class="c" style="left:1197.6px;top:347px;width:75px;height:16px;line-height:16px;font-size:8.4px;letter-spacing:-0.1px;color:#111111">1</div>
<div class="c" style="left:34.6px;top:363px;width:76px;height:16px;line-height:16px;font-size:8.4px;letter-spacing:-0.1px;color:#111111">STD2024</div>
<div class="c" style="left:110.6px;top:363px;width:76px;height:16px;line-height:16px;font-size:8.4px;letter-spacing:-0.1px;color:#111111">James Lewis</div>
<div class="c" style="left:186.6px;top:363px;width:76px;height:16px;line-height:16px;font-size:8.4px;letter-spacing:-0.1px;color:#111111">Male</div>
<div class="c" style="left:262.6px;top:363px;width:76px;height:16px;line-height:16px;font-size:8.4px;letter-spacing:-0.1px;color:#111111">17</div>
<div class="c" style="left:338.6px;top:363px;width:76px;height:16px;line-height:16px;font-size:8.4px;letter-spacing:-0.1px;color:#111111">Arts</div>
<div class="c" style="left:414.6px;top:363px;width:76px;height:16px;line-height:16px;font-size:8.4px;letter-spacing:-0.1px;color:#111111">Marketing</div>
<div class="c" style="left:490.6px;top:363px;width:76px;height:16px;line-height:16px;font-size:8.4px;letter-spacing:-0.1px;color:#111111">6</div>
<div class="c" style="left:566.6px;top:363px;width:92px;height:16px;line-height:16px;font-size:8.4px;letter-spacing:-0.1px;color:#111111">61.66</div>
<div class="c" style="left:658.6px;top:363px;width:117px;height:16px;line-height:16px;font-size:8.4px;letter-spacing:-0.1px;color:#111111">82</div>
<div class="c" style="left:775.6px;top:363px;width:92px;height:16px;line-height:16px;font-size:8.4px;letter-spacing:-0.1px;color:#111111">43.3</div>
<div class="c" style="left:867.6px;top:363px;width:102px;height:16px;line-height:16px;font-size:8.4px;letter-spacing:-0.1px;color:#111111">97</div>
<div class="c" style="left:969.6px;top:363px;width:76px;height:16px;line-height:16px;font-size:8.4px;letter-spacing:-0.1px;color:#111111">1.97</div>
<div class="c" style="left:1045.6px;top:363px;width:76px;height:16px;line-height:16px;font-size:8.4px;letter-spacing:-0.1px;color:#111111">Pass</div>
<div class="c" style="left:1121.6px;top:363px;width:76px;height:16px;line-height:16px;font-size:8.4px;letter-spacing:-0.1px;color:#111111">Kimberly Berry</div>
<div class="c" style="left:1197.6px;top:363px;width:75px;height:16px;line-height:16px;font-size:8.4px;letter-spacing:-0.1px;color:#111111">1</div>
<div class="c" style="left:34.6px;top:379px;width:76px;height:16px;line-height:16px;font-size:8.4px;letter-spacing:-0.1px;color:#111111">STD2033</div>
<div class="c" style="left:110.6px;top:379px;width:76px;height:16px;line-height:16px;font-size:8.4px;letter-spacing:-0.1px;color:#111111">Thomas Walker</div>
<div class="c" style="left:186.6px;top:379px;width:76px;height:16px;line-height:16px;font-size:8.4px;letter-spacing:-0.1px;color:#111111">Male</div>
<div class="c" style="left:262.6px;top:379px;width:76px;height:16px;line-height:16px;font-size:8.4px;letter-spacing:-0.1px;color:#111111">21</div>
<div class="c" style="left:338.6px;top:379px;width:76px;height:16px;line-height:16px;font-size:8.4px;letter-spacing:-0.1px;color:#111111">Arts</div>
<div class="c" style="left:414.6px;top:379px;width:76px;height:16px;line-height:16px;font-size:8.4px;letter-spacing:-0.1px;color:#111111">Marketing</div>
<div class="c" style="left:490.6px;top:379px;width:76px;height:16px;line-height:16px;font-size:8.4px;letter-spacing:-0.1px;color:#111111">4</div>
<div class="c" style="left:566.6px;top:379px;width:92px;height:16px;line-height:16px;font-size:8.4px;letter-spacing:-0.1px;color:#111111">94.24</div>
<div class="c" style="left:658.6px;top:379px;width:117px;height:16px;line-height:16px;font-size:8.4px;letter-spacing:-0.1px;color:#111111">67</div>
<div class="c" style="left:775.6px;top:379px;width:92px;height:16px;line-height:16px;font-size:8.4px;letter-spacing:-0.1px;color:#111111">91.7</div>
<div class="c" style="left:867.6px;top:379px;width:102px;height:16px;line-height:16px;font-size:8.4px;letter-spacing:-0.1px;color:#111111">49</div>
<div class="c" style="left:969.6px;top:379px;width:76px;height:16px;line-height:16px;font-size:8.4px;letter-spacing:-0.1px;color:#111111">3.60</div>
<div class="c" style="left:1045.6px;top:379px;width:76px;height:16px;line-height:16px;font-size:8.4px;letter-spacing:-0.1px;color:#111111">Pass</div>
<div class="c" style="left:1121.6px;top:379px;width:76px;height:16px;line-height:16px;font-size:8.4px;letter-spacing:-0.1px;color:#111111">Katrina Friedman</div>
<div class="c" style="left:1197.6px;top:379px;width:75px;height:16px;line-height:16px;font-size:8.4px;letter-spacing:-0.1px;color:#111111">1</div>
<div class="c" style="left:34.6px;top:395px;width:76px;height:16px;line-height:16px;font-size:8.4px;letter-spacing:-0.1px;color:#111111">STD2034</div>
<div class="c" style="left:110.6px;top:395px;width:76px;height:16px;line-height:16px;font-size:8.4px;letter-spacing:-0.1px;color:#111111">Michael Lewis</div>
<div class="c" style="left:186.6px;top:395px;width:76px;height:16px;line-height:16px;font-size:8.4px;letter-spacing:-0.1px;color:#111111">Male</div>
<div class="c" style="left:262.6px;top:395px;width:76px;height:16px;line-height:16px;font-size:8.4px;letter-spacing:-0.1px;color:#111111">18</div>
<div class="c" style="left:338.6px;top:395px;width:76px;height:16px;line-height:16px;font-size:8.4px;letter-spacing:-0.1px;color:#111111">Arts</div>
<div class="c" style="left:414.6px;top:395px;width:76px;height:16px;line-height:16px;font-size:8.4px;letter-spacing:-0.1px;color:#111111">Programming</div>
<div class="c" style="left:490.6px;top:395px;width:76px;height:16px;line-height:16px;font-size:8.4px;letter-spacing:-0.1px;color:#111111">1</div>
<div class="c" style="left:566.6px;top:395px;width:92px;height:16px;line-height:16px;font-size:8.4px;letter-spacing:-0.1px;color:#111111">55.76</div>
<div class="c" style="left:658.6px;top:395px;width:117px;height:16px;line-height:16px;font-size:8.4px;letter-spacing:-0.1px;color:#111111">48</div>
<div class="c" style="left:775.6px;top:395px;width:92px;height:16px;line-height:16px;font-size:8.4px;letter-spacing:-0.1px;color:#111111">40.5</div>
<div class="c" style="left:867.6px;top:395px;width:102px;height:16px;line-height:16px;font-size:8.4px;letter-spacing:-0.1px;color:#111111">58</div>
<div class="c" style="left:969.6px;top:395px;width:76px;height:16px;line-height:16px;font-size:8.4px;letter-spacing:-0.1px;color:#111111">3.95</div>
<div class="c" style="left:1045.6px;top:395px;width:76px;height:16px;line-height:16px;font-size:8.4px;letter-spacing:-0.1px;color:#111111">Fail</div>
<div class="c" style="left:1121.6px;top:395px;width:76px;height:16px;line-height:16px;font-size:8.4px;letter-spacing:-0.1px;color:#111111">Mary Brown</div>
<div class="c" style="left:1197.6px;top:395px;width:75px;height:16px;line-height:16px;font-size:8.4px;letter-spacing:-0.1px;color:#111111">0</div>
<div class="c" style="left:34.6px;top:411px;width:76px;height:16px;line-height:16px;font-size:8.4px;letter-spacing:-0.1px;color:#111111">STD2038</div>
<div class="c" style="left:110.6px;top:411px;width:76px;height:16px;line-height:16px;font-size:8.4px;letter-spacing:-0.1px;color:#111111">Joseph Hall</div>
<div class="c" style="left:186.6px;top:411px;width:76px;height:16px;line-height:16px;font-size:8.4px;letter-spacing:-0.1px;color:#111111">Female</div>
<div class="c" style="left:262.6px;top:411px;width:76px;height:16px;line-height:16px;font-size:8.4px;letter-spacing:-0.1px;color:#111111">21</div>
<div class="c" style="left:338.6px;top:411px;width:76px;height:16px;line-height:16px;font-size:8.4px;letter-spacing:-0.1px;color:#111111">Arts</div>
<div class="c" style="left:414.6px;top:411px;width:76px;height:16px;line-height:16px;font-size:8.4px;letter-spacing:-0.1px;color:#111111">Marketing</div>
<div class="c" style="left:490.6px;top:411px;width:76px;height:16px;line-height:16px;font-size:8.4px;letter-spacing:-0.1px;color:#111111">4</div>
<div class="c" style="left:566.6px;top:411px;width:92px;height:16px;line-height:16px;font-size:8.4px;letter-spacing:-0.1px;color:#111111">77.62</div>
<div class="c" style="left:658.6px;top:411px;width:117px;height:16px;line-height:16px;font-size:8.4px;letter-spacing:-0.1px;color:#111111">45</div>
<div class="c" style="left:775.6px;top:411px;width:92px;height:16px;line-height:16px;font-size:8.4px;letter-spacing:-0.1px;color:#111111">90.7</div>
<div class="c" style="left:867.6px;top:411px;width:102px;height:16px;line-height:16px;font-size:8.4px;letter-spacing:-0.1px;color:#111111">55</div>
<div class="c" style="left:969.6px;top:411px;width:76px;height:16px;line-height:16px;font-size:8.4px;letter-spacing:-0.1px;color:#111111">1.92</div>
<div class="c" style="left:1045.6px;top:411px;width:76px;height:16px;line-height:16px;font-size:8.4px;letter-spacing:-0.1px;color:#111111">Pass</div>
<div class="c" style="left:1121.6px;top:411px;width:76px;height:16px;line-height:16px;font-size:8.4px;letter-spacing:-0.1px;color:#111111">Chelsey Porter</div>
<div class="c" style="left:1197.6px;top:411px;width:75px;height:16px;line-height:16px;font-size:8.4px;letter-spacing:-0.1px;color:#111111">1</div>
<div class="c" style="left:34.6px;top:427px;width:76px;height:16px;line-height:16px;font-size:8.4px;letter-spacing:-0.1px;color:#111111">STD2040</div>
<div class="c" style="left:110.6px;top:427px;width:76px;height:16px;line-height:16px;font-size:8.4px;letter-spacing:-0.1px;color:#111111">Michael Taylor</div>
<div class="c" style="left:186.6px;top:427px;width:76px;height:16px;line-height:16px;font-size:8.4px;letter-spacing:-0.1px;color:#111111">Male</div>
<div class="c" style="left:262.6px;top:427px;width:76px;height:16px;line-height:16px;font-size:8.4px;letter-spacing:-0.1px;color:#111111">22</div>
<div class="c" style="left:338.6px;top:427px;width:76px;height:16px;line-height:16px;font-size:8.4px;letter-spacing:-0.1px;color:#111111">Arts</div>
<div class="c" style="left:414.6px;top:427px;width:76px;height:16px;line-height:16px;font-size:8.4px;letter-spacing:-0.1px;color:#111111">Math</div>
<div class="c" style="left:490.6px;top:427px;width:76px;height:16px;line-height:16px;font-size:8.4px;letter-spacing:-0.1px;color:#111111">6</div>
<div class="c" style="left:566.6px;top:427px;width:92px;height:16px;line-height:16px;font-size:8.4px;letter-spacing:-0.1px;color:#111111">76.16</div>
<div class="c" style="left:658.6px;top:427px;width:117px;height:16px;line-height:16px;font-size:8.4px;letter-spacing:-0.1px;color:#111111">74</div>
<div class="c" style="left:775.6px;top:427px;width:92px;height:16px;line-height:16px;font-size:8.4px;letter-spacing:-0.1px;color:#111111">78.2</div>
<div class="c" style="left:867.6px;top:427px;width:102px;height:16px;line-height:16px;font-size:8.4px;letter-spacing:-0.1px;color:#111111">85</div>
<div class="c" style="left:969.6px;top:427px;width:76px;height:16px;line-height:16px;font-size:8.4px;letter-spacing:-0.1px;color:#111111">1.22</div>
<div class="c" style="left:1045.6px;top:427px;width:76px;height:16px;line-height:16px;font-size:8.4px;letter-spacing:-0.1px;color:#111111">Pass</div>
<div class="c" style="left:1121.6px;top:427px;width:76px;height:16px;line-height:16px;font-size:8.4px;letter-spacing:-0.1px;color:#111111">Shane Brooks</div>
<div class="c" style="left:1197.6px;top:427px;width:75px;height:16px;line-height:16px;font-size:8.4px;letter-spacing:-0.1px;color:#111111">1</div>
<div class="c" style="left:34.6px;top:443px;width:76px;height:16px;line-height:16px;font-size:8.4px;letter-spacing:-0.1px;color:#111111">STD2041</div>
<div class="c" style="left:110.6px;top:443px;width:76px;height:16px;line-height:16px;font-size:8.4px;letter-spacing:-0.1px;color:#111111">Daniel Thomas</div>
<div class="c" style="left:186.6px;top:443px;width:76px;height:16px;line-height:16px;font-size:8.4px;letter-spacing:-0.1px;color:#111111">Female</div>
<div class="c" style="left:262.6px;top:443px;width:76px;height:16px;line-height:16px;font-size:8.4px;letter-spacing:-0.1px;color:#111111">19</div>
<div class="c" style="left:338.6px;top:443px;width:76px;height:16px;line-height:16px;font-size:8.4px;letter-spacing:-0.1px;color:#111111">Arts</div>
<div class="c" style="left:414.6px;top:443px;width:76px;height:16px;line-height:16px;font-size:8.4px;letter-spacing:-0.1px;color:#111111">Math</div>
<div class="c" style="left:490.6px;top:443px;width:76px;height:16px;line-height:16px;font-size:8.4px;letter-spacing:-0.1px;color:#111111">8</div>
<div class="c" style="left:566.6px;top:443px;width:92px;height:16px;line-height:16px;font-size:8.4px;letter-spacing:-0.1px;color:#111111">99.85</div>
<div class="c" style="left:658.6px;top:443px;width:117px;height:16px;line-height:16px;font-size:8.4px;letter-spacing:-0.1px;color:#111111">94</div>
<div class="c" style="left:775.6px;top:443px;width:92px;height:16px;line-height:16px;font-size:8.4px;letter-spacing:-0.1px;color:#111111">45.9</div>
<div class="c" style="left:867.6px;top:443px;width:102px;height:16px;line-height:16px;font-size:8.4px;letter-spacing:-0.1px;color:#111111">35</div>
<div class="c" style="left:969.6px;top:443px;width:76px;height:16px;line-height:16px;font-size:8.4px;letter-spacing:-0.1px;color:#111111">2.17</div>
<div class="c" style="left:1045.6px;top:443px;width:76px;height:16px;line-height:16px;font-size:8.4px;letter-spacing:-0.1px;color:#111111">Pass</div>
<div class="c" style="left:1121.6px;top:443px;width:76px;height:16px;line-height:16px;font-size:8.4px;letter-spacing:-0.1px;color:#111111">Katrina Friedman</div>
<div class="c" style="left:1197.6px;top:443px;width:75px;height:16px;line-height:16px;font-size:8.4px;letter-spacing:-0.1px;color:#111111">1</div>
<div class="c" style="left:34.6px;top:459px;width:76px;height:16px;line-height:16px;font-size:8.4px;letter-spacing:-0.1px;color:#111111">STD2045</div>
<div class="c" style="left:110.6px;top:459px;width:76px;height:16px;line-height:16px;font-size:8.4px;letter-spacing:-0.1px;color:#111111">Daniel Rodriguez</div>
<div class="c" style="left:186.6px;top:459px;width:76px;height:16px;line-height:16px;font-size:8.4px;letter-spacing:-0.1px;color:#111111">Female</div>
<div class="c" style="left:262.6px;top:459px;width:76px;height:16px;line-height:16px;font-size:8.4px;letter-spacing:-0.1px;color:#111111">24</div>
<div class="c" style="left:338.6px;top:459px;width:76px;height:16px;line-height:16px;font-size:8.4px;letter-spacing:-0.1px;color:#111111">Arts</div>
<div class="c" style="left:414.6px;top:459px;width:76px;height:16px;line-height:16px;font-size:8.4px;letter-spacing:-0.1px;color:#111111">Programming</div>
<div class="c" style="left:490.6px;top:459px;width:76px;height:16px;line-height:16px;font-size:8.4px;letter-spacing:-0.1px;color:#111111">2</div>
<div class="c" style="left:566.6px;top:459px;width:92px;height:16px;line-height:16px;font-size:8.4px;letter-spacing:-0.1px;color:#111111">76.98</div>
<div class="c" style="left:658.6px;top:459px;width:117px;height:16px;line-height:16px;font-size:8.4px;letter-spacing:-0.1px;color:#111111">77</div>
<div class="c" style="left:775.6px;top:459px;width:92px;height:16px;line-height:16px;font-size:8.4px;letter-spacing:-0.1px;color:#111111">45.6</div>
<div class="c" style="left:867.6px;top:459px;width:102px;height:16px;line-height:16px;font-size:8.4px;letter-spacing:-0.1px;color:#111111">88</div>
<div class="c" style="left:969.6px;top:459px;width:76px;height:16px;line-height:16px;font-size:8.4px;letter-spacing:-0.1px;color:#111111">1.60</div>
<div class="c" style="left:1045.6px;top:459px;width:76px;height:16px;line-height:16px;font-size:8.4px;letter-spacing:-0.1px;color:#111111">Fail</div>
<div class="c" style="left:1121.6px;top:459px;width:76px;height:16px;line-height:16px;font-size:8.4px;letter-spacing:-0.1px;color:#111111">Patrick Hernandez</div>
<div class="c" style="left:1197.6px;top:459px;width:75px;height:16px;line-height:16px;font-size:8.4px;letter-spacing:-0.1px;color:#111111">0</div>
<div class="c" style="left:34.6px;top:475px;width:76px;height:16px;line-height:16px;font-size:8.4px;letter-spacing:-0.1px;color:#111111">STD2046</div>
<div class="c" style="left:110.6px;top:475px;width:76px;height:16px;line-height:16px;font-size:8.4px;letter-spacing:-0.1px;color:#111111">Mia Thomas</div>
<div class="c" style="left:186.6px;top:475px;width:76px;height:16px;line-height:16px;font-size:8.4px;letter-spacing:-0.1px;color:#111111">Female</div>
<div class="c" style="left:262.6px;top:475px;width:76px;height:16px;line-height:16px;font-size:8.4px;letter-spacing:-0.1px;color:#111111">23</div>
<div class="c" style="left:338.6px;top:475px;width:76px;height:16px;line-height:16px;font-size:8.4px;letter-spacing:-0.1px;color:#111111">Arts</div>
<div class="c" style="left:414.6px;top:475px;width:76px;height:16px;line-height:16px;font-size:8.4px;letter-spacing:-0.1px;color:#111111">Physics</div>
<div class="c" style="left:490.6px;top:475px;width:76px;height:16px;line-height:16px;font-size:8.4px;letter-spacing:-0.1px;color:#111111">6</div>
<div class="c" style="left:566.6px;top:475px;width:92px;height:16px;line-height:16px;font-size:8.4px;letter-spacing:-0.1px;color:#111111">87.30</div>
<div class="c" style="left:658.6px;top:475px;width:117px;height:16px;line-height:16px;font-size:8.4px;letter-spacing:-0.1px;color:#111111">60</div>
<div class="c" style="left:775.6px;top:475px;width:92px;height:16px;line-height:16px;font-size:8.4px;letter-spacing:-0.1px;color:#111111">44.5</div>
<div class="c" style="left:867.6px;top:475px;width:102px;height:16px;line-height:16px;font-size:8.4px;letter-spacing:-0.1px;color:#111111">99</div>
<div class="c" style="left:969.6px;top:475px;width:76px;height:16px;line-height:16px;font-size:8.4px;letter-spacing:-0.1px;color:#111111">3.26</div>
<div class="c" style="left:1045.6px;top:475px;width:76px;height:16px;line-height:16px;font-size:8.4px;letter-spacing:-0.1px;color:#111111">Pass</div>
<div class="c" style="left:1121.6px;top:475px;width:76px;height:16px;line-height:16px;font-size:8.4px;letter-spacing:-0.1px;color:#111111">Kimberly Berry</div>
<div class="c" style="left:1197.6px;top:475px;width:75px;height:16px;line-height:16px;font-size:8.4px;letter-spacing:-0.1px;color:#111111">1</div>
<div class="c" style="left:34.6px;top:491px;width:76px;height:16px;line-height:16px;font-size:8.4px;letter-spacing:-0.1px;color:#111111">STD2047</div>
<div class="c" style="left:110.6px;top:491px;width:76px;height:16px;line-height:16px;font-size:8.4px;letter-spacing:-0.1px;color:#111111">Sarah Walker</div>
<div class="c" style="left:186.6px;top:491px;width:76px;height:16px;line-height:16px;font-size:8.4px;letter-spacing:-0.1px;color:#111111">Female</div>
<div class="c" style="left:262.6px;top:491px;width:76px;height:16px;line-height:16px;font-size:8.4px;letter-spacing:-0.1px;color:#111111">18</div>
<div class="c" style="left:338.6px;top:491px;width:76px;height:16px;line-height:16px;font-size:8.4px;letter-spacing:-0.1px;color:#111111">Arts</div>
<div class="c" style="left:414.6px;top:491px;width:76px;height:16px;line-height:16px;font-size:8.4px;letter-spacing:-0.1px;color:#111111">Physics</div>
<div class="c" style="left:490.6px;top:491px;width:76px;height:16px;line-height:16px;font-size:8.4px;letter-spacing:-0.1px;color:#111111">1</div>
<div class="c" style="left:566.6px;top:491px;width:92px;height:16px;line-height:16px;font-size:8.4px;letter-spacing:-0.1px;color:#111111">94.72</div>
<div class="c" style="left:658.6px;top:491px;width:117px;height:16px;line-height:16px;font-size:8.4px;letter-spacing:-0.1px;color:#111111">85</div>
<div class="c" style="left:775.6px;top:491px;width:92px;height:16px;line-height:16px;font-size:8.4px;letter-spacing:-0.1px;color:#111111">92.2</div>
<div class="c" style="left:867.6px;top:491px;width:102px;height:16px;line-height:16px;font-size:8.4px;letter-spacing:-0.1px;color:#111111">68</div>
<div class="c" style="left:969.6px;top:491px;width:76px;height:16px;line-height:16px;font-size:8.4px;letter-spacing:-0.1px;color:#111111">1.06</div>
<div class="c" style="left:1045.6px;top:491px;width:76px;height:16px;line-height:16px;font-size:8.4px;letter-spacing:-0.1px;color:#111111">Pass</div>
<div class="c" style="left:1121.6px;top:491px;width:76px;height:16px;line-height:16px;font-size:8.4px;letter-spacing:-0.1px;color:#111111">Danielle Buckley</div>
<div class="c" style="left:1197.6px;top:491px;width:75px;height:16px;line-height:16px;font-size:8.4px;letter-spacing:-0.1px;color:#111111">1</div>
<div class="c" style="left:34.6px;top:507px;width:76px;height:16px;line-height:16px;font-size:8.4px;letter-spacing:-0.1px;color:#111111">STD2055</div>
<div class="c" style="left:110.6px;top:507px;width:76px;height:16px;line-height:16px;font-size:8.4px;letter-spacing:-0.1px;color:#111111">Emily Rodriguez</div>
<div class="c" style="left:186.6px;top:507px;width:76px;height:16px;line-height:16px;font-size:8.4px;letter-spacing:-0.1px;color:#111111">Female</div>
<div class="c" style="left:262.6px;top:507px;width:76px;height:16px;line-height:16px;font-size:8.4px;letter-spacing:-0.1px;color:#111111">22</div>
<div class="c" style="left:338.6px;top:507px;width:76px;height:16px;line-height:16px;font-size:8.4px;letter-spacing:-0.1px;color:#111111">Arts</div>
<div class="c" style="left:414.6px;top:507px;width:76px;height:16px;line-height:16px;font-size:8.4px;letter-spacing:-0.1px;color:#111111">Biology</div>
<div class="c" style="left:490.6px;top:507px;width:76px;height:16px;line-height:16px;font-size:8.4px;letter-spacing:-0.1px;color:#111111">6</div>
<div class="c" style="left:566.6px;top:507px;width:92px;height:16px;line-height:16px;font-size:8.4px;letter-spacing:-0.1px;color:#111111">75.56</div>
<div class="c" style="left:658.6px;top:507px;width:117px;height:16px;line-height:16px;font-size:8.4px;letter-spacing:-0.1px;color:#111111">97</div>
<div class="c" style="left:775.6px;top:507px;width:92px;height:16px;line-height:16px;font-size:8.4px;letter-spacing:-0.1px;color:#111111">73.3</div>
<div class="c" style="left:867.6px;top:507px;width:102px;height:16px;line-height:16px;font-size:8.4px;letter-spacing:-0.1px;color:#111111">67</div>
<div class="c" style="left:969.6px;top:507px;width:76px;height:16px;line-height:16px;font-size:8.4px;letter-spacing:-0.1px;color:#111111">2.18</div>
<div class="c" style="left:1045.6px;top:507px;width:76px;height:16px;line-height:16px;font-size:8.4px;letter-spacing:-0.1px;color:#111111">Pass</div>
<div class="c" style="left:1121.6px;top:507px;width:76px;height:16px;line-height:16px;font-size:8.4px;letter-spacing:-0.1px;color:#111111">Kimberly Berry</div>
<div class="c" style="left:1197.6px;top:507px;width:75px;height:16px;line-height:16px;font-size:8.4px;letter-spacing:-0.1px;color:#111111">1</div>
<div class="c" style="left:34.6px;top:523px;width:76px;height:16px;line-height:16px;font-size:8.4px;letter-spacing:-0.1px;color:#111111">STD2062</div>
<div class="c" style="left:110.6px;top:523px;width:76px;height:16px;line-height:16px;font-size:8.4px;letter-spacing:-0.1px;color:#111111">Robert Robinson</div>
<div class="c" style="left:186.6px;top:523px;width:76px;height:16px;line-height:16px;font-size:8.4px;letter-spacing:-0.1px;color:#111111">Female</div>
<div class="c" style="left:262.6px;top:523px;width:76px;height:16px;line-height:16px;font-size:8.4px;letter-spacing:-0.1px;color:#111111">22</div>
<div class="c" style="left:338.6px;top:523px;width:76px;height:16px;line-height:16px;font-size:8.4px;letter-spacing:-0.1px;color:#111111">Arts</div>
<div class="c" style="left:414.6px;top:523px;width:76px;height:16px;line-height:16px;font-size:8.4px;letter-spacing:-0.1px;color:#111111">Economics</div>
<div class="c" style="left:490.6px;top:523px;width:76px;height:16px;line-height:16px;font-size:8.4px;letter-spacing:-0.1px;color:#111111">1</div>
<div class="c" style="left:566.6px;top:523px;width:92px;height:16px;line-height:16px;font-size:8.4px;letter-spacing:-0.1px;color:#111111">95.17</div>
<div class="c" style="left:658.6px;top:523px;width:117px;height:16px;line-height:16px;font-size:8.4px;letter-spacing:-0.1px;color:#111111">84</div>
<div class="c" style="left:775.6px;top:523px;width:92px;height:16px;line-height:16px;font-size:8.4px;letter-spacing:-0.1px;color:#111111">52.3</div>
<div class="c" style="left:867.6px;top:523px;width:102px;height:16px;line-height:16px;font-size:8.4px;letter-spacing:-0.1px;color:#111111">76</div>
<div class="c" style="left:969.6px;top:523px;width:76px;height:16px;line-height:16px;font-size:8.4px;letter-spacing:-0.1px;color:#111111">1.14</div>
<div class="c" style="left:1045.6px;top:523px;width:76px;height:16px;line-height:16px;font-size:8.4px;letter-spacing:-0.1px;color:#111111">Pass</div>
<div class="c" style="left:1121.6px;top:523px;width:76px;height:16px;line-height:16px;font-size:8.4px;letter-spacing:-0.1px;color:#111111">Patrick Hernandez</div>
<div class="c" style="left:1197.6px;top:523px;width:75px;height:16px;line-height:16px;font-size:8.4px;letter-spacing:-0.1px;color:#111111">1</div>
<div class="c" style="left:34.6px;top:539px;width:76px;height:16px;line-height:16px;font-size:8.4px;letter-spacing:-0.1px;color:#111111">STD2063</div>
<div class="c" style="left:110.6px;top:539px;width:76px;height:16px;line-height:16px;font-size:8.4px;letter-spacing:-0.1px;color:#111111">Ava Garcia</div>
<div class="c" style="left:186.6px;top:539px;width:76px;height:16px;line-height:16px;font-size:8.4px;letter-spacing:-0.1px;color:#111111">Female</div>
<div class="c" style="left:262.6px;top:539px;width:76px;height:16px;line-height:16px;font-size:8.4px;letter-spacing:-0.1px;color:#111111">15</div>
<div class="c" style="left:338.6px;top:539px;width:76px;height:16px;line-height:16px;font-size:8.4px;letter-spacing:-0.1px;color:#111111">Arts</div>
<div class="c" style="left:414.6px;top:539px;width:76px;height:16px;line-height:16px;font-size:8.4px;letter-spacing:-0.1px;color:#111111">Programming</div>
<div class="c" style="left:490.6px;top:539px;width:76px;height:16px;line-height:16px;font-size:8.4px;letter-spacing:-0.1px;color:#111111">1</div>
<div class="c" style="left:566.6px;top:539px;width:92px;height:16px;line-height:16px;font-size:8.4px;letter-spacing:-0.1px;color:#111111">84.69</div>
<div class="c" style="left:658.6px;top:539px;width:117px;height:16px;line-height:16px;font-size:8.4px;letter-spacing:-0.1px;color:#111111">47</div>
<div class="c" style="left:775.6px;top:539px;width:92px;height:16px;line-height:16px;font-size:8.4px;letter-spacing:-0.1px;color:#111111">31.9</div>
<div class="c" style="left:867.6px;top:539px;width:102px;height:16px;line-height:16px;font-size:8.4px;letter-spacing:-0.1px;color:#111111">31</div>
<div class="c" style="left:969.6px;top:539px;width:76px;height:16px;line-height:16px;font-size:8.4px;letter-spacing:-0.1px;color:#111111">1.67</div>
<div class="c" style="left:1045.6px;top:539px;width:76px;height:16px;line-height:16px;font-size:8.4px;letter-spacing:-0.1px;color:#111111">Pass</div>
<div class="c" style="left:1121.6px;top:539px;width:76px;height:16px;line-height:16px;font-size:8.4px;letter-spacing:-0.1px;color:#111111">Mary Brown</div>
<div class="c" style="left:1197.6px;top:539px;width:75px;height:16px;line-height:16px;font-size:8.4px;letter-spacing:-0.1px;color:#111111">1</div>
<div class="c" style="left:34.6px;top:555px;width:76px;height:16px;line-height:16px;font-size:8.4px;letter-spacing:-0.1px;color:#111111">STD2064</div>
<div class="c" style="left:110.6px;top:555px;width:76px;height:16px;line-height:16px;font-size:8.4px;letter-spacing:-0.1px;color:#111111">Charles Brown</div>
<div class="c" style="left:186.6px;top:555px;width:76px;height:16px;line-height:16px;font-size:8.4px;letter-spacing:-0.1px;color:#111111">Male</div>
<div class="c" style="left:262.6px;top:555px;width:76px;height:16px;line-height:16px;font-size:8.4px;letter-spacing:-0.1px;color:#111111">18</div>
<div class="c" style="left:338.6px;top:555px;width:76px;height:16px;line-height:16px;font-size:8.4px;letter-spacing:-0.1px;color:#111111">Arts</div>
<div class="c" style="left:414.6px;top:555px;width:76px;height:16px;line-height:16px;font-size:8.4px;letter-spacing:-0.1px;color:#111111">Marketing</div>
<div class="c" style="left:490.6px;top:555px;width:76px;height:16px;line-height:16px;font-size:8.4px;letter-spacing:-0.1px;color:#111111">8</div>
<div class="c" style="left:566.6px;top:555px;width:92px;height:16px;line-height:16px;font-size:8.4px;letter-spacing:-0.1px;color:#111111">82.96</div>
<div class="c" style="left:658.6px;top:555px;width:117px;height:16px;line-height:16px;font-size:8.4px;letter-spacing:-0.1px;color:#111111">40</div>
<div class="c" style="left:775.6px;top:555px;width:92px;height:16px;line-height:16px;font-size:8.4px;letter-spacing:-0.1px;color:#111111">54.8</div>
<div class="c" style="left:867.6px;top:555px;width:102px;height:16px;line-height:16px;font-size:8.4px;letter-spacing:-0.1px;color:#111111">79</div>
<div class="c" style="left:969.6px;top:555px;width:76px;height:16px;line-height:16px;font-size:8.4px;letter-spacing:-0.1px;color:#111111">2.48</div>
<div class="c" style="left:1045.6px;top:555px;width:76px;height:16px;line-height:16px;font-size:8.4px;letter-spacing:-0.1px;color:#111111">Pass</div>
<div class="c" style="left:1121.6px;top:555px;width:76px;height:16px;line-height:16px;font-size:8.4px;letter-spacing:-0.1px;color:#111111">Shane Brooks</div>
<div class="c" style="left:1197.6px;top:555px;width:75px;height:16px;line-height:16px;font-size:8.4px;letter-spacing:-0.1px;color:#111111">1</div>
<div class="a" style="left:1272px;top:110px;width:8px;height:476px;background:#fcfcfd;border-left:1px solid #e3e3e3"></div>
<div class="a" style="left:1274px;top:129px;width:8px;height:19px;border-radius:4px;background:#dadce0"></div>
<div class="a" style="left:1273px;top:551px;width:7px;height:1px;background:#e3e3e3"></div>
<div class="a" style="left:1273px;top:563px;width:7px;height:1px;background:#e3e3e3"></div>
<div class="dd" style="left:1274px;top:555px;border-top:none;border-bottom:3px solid #8f8f8f;border-left-width:3px;border-right-width:3px"></div>
<div class="dd" style="left:1274px;top:568px;border-top-width:3px;border-top-color:#8f8f8f;border-left-width:3px;border-right-width:3px"></div>
<div class="a" style="left:0;top:574px;width:1272px;height:10px;background:#fbfbfc;border-top:1px solid #e3e3e3"></div>
<div class="a" style="left:0;top:575px;width:33px;height:9px;background:#f5f5f5"></div>
<div class="a" style="left:33px;top:574px;width:1px;height:10px;background:#e3e3e3"></div>
<div class="a" style="left:36px;top:576px;width:722px;height:6px;border-radius:3px;background:#dadce0"></div>
<div class="a" style="left:0;top:584px;width:1280px;height:2px;background:#fbfbfc"></div>
<div class="a" style="left:1248px;top:573px;width:1px;height:11px;background:#e3e3e3"></div>
<div class="a" style="left:1261px;top:573px;width:1px;height:11px;background:#e3e3e3"></div>
<div class="dd" style="left:1253px;top:576px;border-top:3px solid transparent;border-bottom:3px solid transparent;border-right:3px solid #8f8f8f;border-left:none"></div>
<div class="dd" style="left:1266px;top:576px;border-top:3px solid transparent;border-bottom:3px solid transparent;border-left:3px solid #8f8f8f;border-right:none"></div>
</body></html>
